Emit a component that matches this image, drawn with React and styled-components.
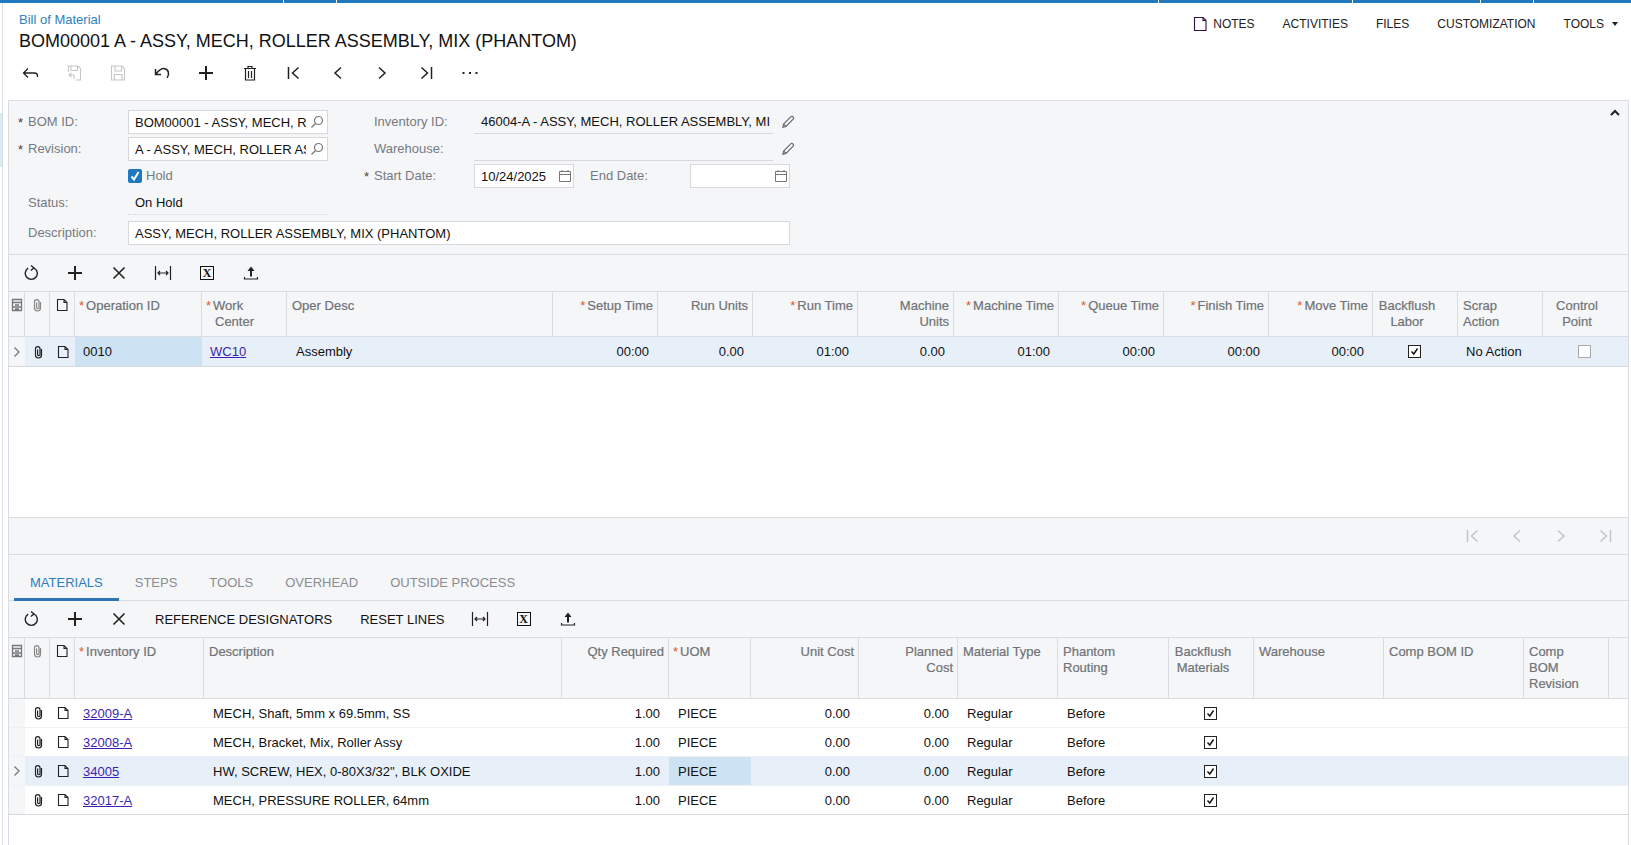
import React from "react";
import styled, { createGlobalStyle } from "styled-components";

const GlobalStyle = createGlobalStyle`
    html, body {
        margin: 0;
        height: 100%;
        background: #fff;
        overflow: hidden;
    }
    body {
        font-family: "Liberation Sans", Arial, sans-serif;
        font-size: 13px;
        color: #111;
    }
`;

const BLUE = "#2079bf";
const LINE = "#d9dce0";
const PANEL = "#f5f6f8";

const Page = styled.div`
    width: 1631px;
    height: 845px;
    display: flex;
    flex-direction: column;
    overflow: hidden;
`;

const TopStripe = styled.div`
    display: flex;
    gap: 1px;
    height: 3px;
    flex: none;
`;

const StripeSegment = styled.div`
    flex: ${(p) => p.$grow} 0 0;
    background: ${BLUE};
`;

const Frame = styled.div`
    flex: 1;
    display: flex;
    min-height: 0;
`;

const SideRail = styled.div`
    width: 2px;
    flex: none;
    border-right: 1px solid ${LINE};
    padding-top: 110px;
`;

const RailMark = styled.div`
    height: 54px;
    background: #dceaf6;
`;

const Content = styled.div`
    flex: 1;
    min-width: 0;
    margin-left: 5px;
    display: flex;
    flex-direction: column;
`;

const Header = styled.div`
    height: 97px;
    flex: none;
    display: flex;
    justify-content: space-between;
`;

const HeaderLeft = styled.div`
    padding: 9px 0 0 11px;
    display: flex;
    flex-direction: column;
`;

const Breadcrumb = styled.div`
    font-size: 13px;
    line-height: 15px;
    color: #2f7fc0;
`;

const Title = styled.h1`
    margin: 2px 0 0;
    font-size: 18px;
    line-height: 24px;
    font-weight: 400;
    color: #111;
    white-space: nowrap;
`;

const MainToolbar = styled.div`
    display: flex;
    margin: 5px 0 0 -11px;
    height: 30px;
    align-items: center;
`;

const ToolButton = styled.span`
    width: 44px;
    flex: none;
    display: flex;
    align-items: center;
    justify-content: center;
    color: ${(p) => (p.$disabled ? "#c4c6c9" : "#222")};
`;

const TopNav = styled.div`
    display: flex;
    align-items: center;
    height: 16px;
    margin-top: 13px;
    padding-right: 13px;
    font-size: 12px;
    color: #222;
`;

const NavItem = styled.span`
    display: inline-flex;
    align-items: center;
    gap: 5px;
    margin-left: 28px;
    white-space: nowrap;
`;

const NavCaret = styled.span`
    width: 0;
    height: 0;
    margin-left: 3px;
    border-left: 3.5px solid transparent;
    border-right: 3.5px solid transparent;
    border-top: 4px solid #222;
`;

const UpperSection = styled.div`
    flex: none;
    width: 1619px;
    box-sizing: content-box;
    border: 1px solid ${LINE};
    border-bottom: none;
    margin-right: 3px;
`;

const FormPanel = styled.div`
    position: relative;
    height: 154px;
    box-sizing: border-box;
    background: ${PANEL};
    border-bottom: 1px solid ${LINE};
    padding-top: 9px;
`;

const CollapseButton = styled.span`
    position: absolute;
    top: 6px;
    right: 7px;
    color: #222;
    display: flex;
`;

const FormTop = styled.div`
    display: flex;
    height: 108px;
`;

const FormColumn = styled.div`
    display: flex;
    flex-direction: column;
    gap: 3px;
    width: ${(p) => p.$width}px;
    flex: none;
`;

const FieldRow = styled.div`
    display: flex;
    align-items: center;
    height: 24px;
    margin-top: ${(p) => p.$top || 0}px;
`;

const FieldLabel = styled.label`
    width: ${(p) => p.$width}px;
    flex: none;
    box-sizing: border-box;
    display: flex;
    align-items: center;
    padding-left: ${(p) => p.$indent || 0}px;
    padding-bottom: 2px;
    color: #767a80;
    font-size: 13px;
`;

const Star = styled.span`
    width: 10px;
    flex: none;
    font-size: 13px;
    line-height: 12px;
    color: #444;
    margin-top: 3px;
`;

const TextBox = styled.div`
    width: ${(p) => p.$width}px;
    height: 24px;
    flex: none;
    box-sizing: border-box;
    display: flex;
    align-items: center;
    background: #fff;
    border: 1px solid #d6d8dc;
    padding: 0 ${(p) => p.$right ?? 3}px 0 6px;
    font-size: 13px;
    color: #111;
`;

const ClippedText = styled.span`
    flex: 1;
    min-width: 0;
    overflow: hidden;
    white-space: nowrap;
`;

const BoxIcon = styled.span`
    flex: none;
    display: flex;
    margin-left: 4px;
    color: #777;
`;

const ReadOnlyValue = styled.div`
    width: ${(p) => p.$width}px;
    height: 24px;
    flex: none;
    box-sizing: border-box;
    display: flex;
    align-items: center;
    padding-left: ${(p) => (p.$indent ? 7 : 3)}px;
    font-size: 13px;
    border-bottom: 1px ${(p) => (p.$dotted ? "dotted #d3d5d8" : "solid #d6d8dc")};
    white-space: nowrap;
    overflow: hidden;
`;

const PencilButton = styled.span`
    display: flex;
    margin-left: 8px;
    color: #666;
`;

const HoldCheck = styled.span`
    width: 14px;
    height: 14px;
    flex: none;
    display: flex;
    align-items: center;
    justify-content: center;
    border-radius: 2px;
    background: ${BLUE};
    color: #fff;
`;

const HoldText = styled.span`
    margin: 0 0 2px 4px;
    font-size: 13px;
    color: #767a80;
`;

const Toolbar = styled.div`
    height: ${(p) => p.$height}px;
    box-sizing: border-box;
    display: flex;
    align-items: center;
    background: ${PANEL};
    border-bottom: 1px solid ${LINE};
`;

const TextButton = styled.span`
    margin: 0 ${(p) => p.$right}px 0 ${(p) => p.$left}px;
    font-size: 13px;
    color: #111;
    white-space: nowrap;
`;

const GridRow = styled.div`
    display: grid;
    grid-template-columns: ${(p) => p.$cols};
    height: ${(p) => p.$height}px;
    box-sizing: border-box;
    background: ${(p) => (p.$selected ? "#e7f0f9" : "#fff")};
    border-bottom: 1px solid ${(p) => (p.$strong ? "#d5d8dc" : "#eff1f3")};
`;

const HeaderRow = styled(GridRow)`
    background: ${PANEL};
    border-bottom: 1px solid ${LINE};
`;

const HeadCell = styled.div`
    box-sizing: border-box;
    border-right: 1px solid ${LINE};
    padding: 6px ${(p) => (p.$icon ? 0 : p.$align === "center" ? 21 : 4)}px 0 ${(p) => (p.$icon ? 0 : 5)}px;
    font-size: 13px;
    font-weight: 400;
    line-height: 16px;
    color: #6f7276;
    -webkit-text-stroke: 0.2px #6f7276;
    text-align: ${(p) => p.$align || "left"};
    display: ${(p) => (p.$icon ? "flex" : "block")};
    justify-content: center;
    align-items: flex-start;
    white-space: nowrap;
    overflow: hidden;
    &:last-child {
        border-right: none;
    }
`;

const HeadLine = styled.span`
    display: block;
    padding-left: ${(p) => (p.$indent ? 8 : 0)}px;
`;

const ReqMark = styled.span`
    color: #e2562a;
    margin: 0 2px 0 -1px;
    -webkit-text-stroke: 0;
`;

const Cell = styled.div`
    box-sizing: border-box;
    min-width: 0;
    display: flex;
    align-items: center;
    justify-content: ${(p) =>
        p.$align === "right" ? "flex-end" : p.$align === "center" ? "center" : "flex-start"};
    padding: 0 ${(p) => (p.$align === "right" ? 9 : p.$align === "center" ? 2 : 0)}px 0
        ${(p) => (p.$align === "left" ? (p.$tight ? 8 : 9) : 0)}px;
    font-size: 13px;
    color: #111;
    white-space: nowrap;
    background: ${(p) => (p.$active ? "#cde3f3" : p.$gutter ? PANEL : "transparent")};
`;

const LeadCell = styled(Cell)`
    padding: 0;
`;

const DataLink = styled.a`
    color: #3a1fb0;
    text-decoration: underline;
`;

const GridCheck = styled.span`
    width: 11px;
    height: 11px;
    display: flex;
    align-items: center;
    justify-content: center;
    background: #fff;
    border: 1px solid ${(p) => (p.$checked ? "#222" : "#aaa")};
    color: #111;
`;

const GridBody = styled.div`
    height: ${(p) => p.$height}px;
    background: #fff;
    border-bottom: 1px solid ${LINE};
`;

const LowerSection = styled.div`
    flex: 1;
    width: 1619px;
    box-sizing: content-box;
    border-left: 1px solid ${LINE};
    border-right: 1px solid ${LINE};
`;

const Pager = styled.div`
    height: 37px;
    box-sizing: border-box;
    background: ${PANEL};
    border-bottom: 1px solid ${LINE};
    display: flex;
    align-items: center;
    justify-content: flex-end;
    gap: 8px;
    padding-right: 5px;
    color: #c2c4c7;
`;

const PagerButton = styled.span`
    width: 36px;
    display: flex;
    justify-content: center;
`;

const TabBar = styled.div`
    height: 46px;
    box-sizing: border-box;
    display: flex;
    align-items: flex-end;
    background: ${PANEL};
    border-bottom: 1px solid ${LINE};
    padding-left: 5px;
`;

const Tab = styled.span`
    height: 31px;
    margin-bottom: -1px;
    box-sizing: border-box;
    padding: 0 16px;
    font-size: 13px;
    line-height: 25px;
    color: ${(p) => (p.$active ? "#2d7dbd" : "#8a8d91")};
    border-bottom: 3px solid ${(p) => (p.$active ? "#2d75b5" : "transparent")};
`;

const ExcelBox = styled.span`
    width: 12px;
    height: 12px;
    display: flex;
    align-items: center;
    justify-content: center;
    border: 1.5px solid #111;
    font-family: "Liberation Serif", serif;
    font-weight: 700;
    font-size: 12px;
    line-height: 12px;
    color: #111;
`;

/* icons */
const Svg = ({ size = 16, children, sw = 1.3, view }) => (
    <svg
        width={size}
        height={size}
        viewBox={view || `0 0 ${size} ${size}`}
        fill="none"
        stroke="currentColor"
        strokeWidth={sw}
    >
        {children}
    </svg>
);

const BackIcon = () => (
    <Svg size={18}>
        <path d="M7 4.5 L2.5 9 L7 13.5 M2.5 9 H13.5 Q16.5 9 16.5 12 V13" />
    </Svg>
);
const SaveBackIcon = () => (
    <Svg size={18} sw={1.1}>
        <path d="M3.5 8 V2 H13 L15.5 4.5 V16 H11 M6 2 V6.5 H12.5 V2 M9 11 H4.5 M6.5 9 L4 11 L6.5 13 M9 11 V15" />
    </Svg>
);
const SaveIcon = () => (
    <Svg size={18} sw={1.1}>
        <path d="M2.5 2 H13 L15.5 4.5 V16 H2.5 Z M6 2 V7 H12.5 V2 M5.5 16 V10.5 H13 V16" />
    </Svg>
);
const UndoIcon = () => (
    <Svg size={18} sw={1.5}>
        <path d="M2.5 5 V10.5 H8 M2.7 10.2 C6 6.2 8 4.2 11 4.5 C15.5 5 17 10 14 13.8" />
    </Svg>
);
const PlusIcon = () => (
    <Svg size={16} sw={2}>
        <path d="M8 1 V15 M1 8 H15" />
    </Svg>
);
const TrashIcon = () => (
    <Svg size={18} sw={1.2}>
        <path d="M3 4.5 H15 M7 4.5 V2.5 H11 V4.5 M4.5 4.5 V16 H13.5 V4.5 M7.5 7 V14 M10.5 7 V14" />
    </Svg>
);
const FirstIcon = () => (
    <Svg size={16} sw={1.5}>
        <path d="M2.5 2 V14 M12.5 2.5 L6.5 8 L12.5 13.5" />
    </Svg>
);
const PrevIcon = () => (
    <Svg size={16} sw={1.5}>
        <path d="M11 2.5 L5 8 L11 13.5" />
    </Svg>
);
const NextIcon = () => (
    <Svg size={16} sw={1.5}>
        <path d="M5 2.5 L11 8 L5 13.5" />
    </Svg>
);
const LastIcon = () => (
    <Svg size={16} sw={1.5}>
        <path d="M13.5 2 V14 M3.5 2.5 L9.5 8 L3.5 13.5" />
    </Svg>
);
const DotsIcon = () => (
    <svg width="16" height="4" viewBox="0 0 16 4" fill="currentColor">
        <rect x="0.5" y="1" width="2" height="2" />
        <rect x="7" y="1" width="2" height="2" />
        <rect x="13.5" y="1" width="2" height="2" />
    </svg>
);
const RefreshIcon = () => (
    <Svg size={16} sw={1.4}>
        <path d="M5.2 3.2 A6 6 0 1 0 11 3 M8 0.5 L11 3 L7.8 5.5" />
    </Svg>
);
const CloseIcon = () => (
    <Svg size={14} sw={1.6}>
        <path d="M1.5 1.5 L12.5 12.5 M12.5 1.5 L1.5 12.5" />
    </Svg>
);
const FitIcon = () => (
    <Svg size={18} sw={1.2}>
        <path d="M1.5 2 V16 M16.5 2 V16 M4 9 H14 M6 7 L4 9 L6 11 M12 7 L14 9 L12 11" />
    </Svg>
);
const UploadIcon = () => (
    <Svg size={16} sw={1.4}>
        <path d="M1.5 12 V14 H14.5 V12" strokeWidth="1.2" />
        <path d="M8 3 V11.5" strokeWidth="2" />
        <path d="M4.5 6 L8 1.5 L11.5 6 Z" fill="currentColor" stroke="none" />
    </Svg>
);
const ClipIcon = ({ color }) => (
    <span style={{ color, display: "flex" }}>
        <Svg size={14} sw={1.2}>
            <path d="M10.5 4 V10 A3 3 0 0 1 4.5 10 V3.8 A2.2 2.2 0 0 1 9 3.8 V9.5 A1.2 1.2 0 0 1 6.6 9.5 V4.5" />
        </Svg>
    </span>
);
const NoteIcon = ({ size = 14, color = "#222" }) => (
    <span style={{ color, display: "flex" }}>
        <Svg size={size} sw={1.1}>
            <path d={`M2.5 1.5 H${size - 5} L${size - 2} 4.5 V${size - 1.5} H2.5 Z M${size - 5} 1.5 V4.5 H${size - 2}`} />
        </Svg>
    </span>
);
const FilesHeadIcon = () => (
    <span style={{ color: "#777", display: "flex" }}>
        <Svg size={14} sw={1.3}>
            <path d="M2.5 1.5 H11.5 V12.5 H2.5 Z M2.5 4.5 H11.5 M2.5 9 H11.5 M5 7 H9 M5 11 H9" />
        </Svg>
    </span>
);
const SearchIcon = () => (
    <Svg size={14} sw={1.2}>
        <circle cx="8.5" cy="5.5" r="4" />
        <path d="M5.5 8.5 L1.5 12.5" />
    </Svg>
);
const CalendarIcon = () => (
    <Svg size={14} sw={1}>
        <path d="M1.5 2.5 H12.5 V12.5 H1.5 Z M1.5 5.5 H12.5 M4 1 V2.5 M10 1 V2.5" />
    </Svg>
);
const PencilIcon = () => (
    <Svg size={14} sw={1.1}>
        <path d="M1.8 12.2 L2.6 9 L10 1.6 Q11 1 12 2 Q13 3 12.4 4 L5 11.4 Z M2.6 9 L5 11.4" />
    </Svg>
);
const Chevron = ({ color = "#777" }) => (
    <span style={{ color, display: "flex" }}>
        <Svg size={12} sw={1.3}>
            <path d="M3.5 1.5 L8 6 L3.5 10.5" />
        </Svg>
    </span>
);
const TickIcon = () => (
    <Svg size={9} sw={1.4}>
        <path d="M1.5 4.5 L3.8 7 L7.5 1.5" />
    </Svg>
);
const HoldTick = () => (
    <Svg size={12} sw={2}>
        <path d="M2.5 6.5 L5 9.5 L9.5 2" />
    </Svg>
);
const UpIcon = () => (
    <Svg size={12} sw={2}>
        <path d="M2 8 L6 4 L10 8" />
    </Svg>
);

const px = (list) => list.map((w) => `${w}px`).join(" ");

const OPERATION_COLS = px([16, 25, 25, 127, 85, 266, 105, 95, 105, 96, 105, 105, 105, 104, 85, 85, 84]);
const MATERIAL_COLS = px([16, 25, 25, 129, 358, 107, 82, 108, 99, 100, 111, 85, 130, 140, 85, 17]);

const operationHead = [
    { label: "Operation ID", req: true },
    { label: "Work", second: "Center", req: true },
    { label: "Oper Desc" },
    { label: "Setup Time", req: true, align: "right" },
    { label: "Run Units", align: "right" },
    { label: "Run Time", req: true, align: "right" },
    { label: "Machine", second: "Units", align: "right" },
    { label: "Machine Time", req: true, align: "right" },
    { label: "Queue Time", req: true, align: "right" },
    { label: "Finish Time", req: true, align: "right" },
    { label: "Move Time", req: true, align: "right" },
    { label: "Backflush", second: "Labor", align: "center" },
    { label: "Scrap", second: "Action" },
    { label: "Control", second: "Point", align: "center" },
];

const materialHead = [
    { label: "Inventory ID", req: true },
    { label: "Description" },
    { label: "Qty Required", align: "right" },
    { label: "UOM", req: true },
    { label: "Unit Cost", align: "right" },
    { label: "Planned", second: "Cost", align: "right" },
    { label: "Material Type" },
    { label: "Phantom", second: "Routing" },
    { label: "Backflush", second: "Materials", align: "center" },
    { label: "Warehouse" },
    { label: "Comp BOM ID" },
    { label: "Comp", second: "BOM", third: "Revision" },
];

const materials = [
    { id: "32009-A", desc: "MECH, Shaft, 5mm x 69.5mm, SS" },
    { id: "32008-A", desc: "MECH, Bracket, Mix, Roller Assy" },
    { id: "34005", desc: 'HW, SCREW, HEX, 0-80X3/32", BLK OXIDE', selected: true },
    { id: "32017-A", desc: "MECH, PRESSURE ROLLER, 64mm" },
];

function HeadCells({ items }) {
    return (
        <>
            <HeadCell $icon><FilesHeadIcon /></HeadCell>
            <HeadCell $icon><ClipIcon color="#888" /></HeadCell>
            <HeadCell $icon><NoteIcon /></HeadCell>
            {items.map((c) => (
                <HeadCell key={c.label} $align={c.align}>
                    <HeadLine>
                        {c.req && <ReqMark>*</ReqMark>}
                        {c.label}
                    </HeadLine>
                    {c.second && <HeadLine $indent={c.req}>{c.second}</HeadLine>}
                    {c.third && <HeadLine>{c.third}</HeadLine>}
                </HeadCell>
            ))}
        </>
    );
}

function RowLead({ selected }) {
    return (
        <>
            <LeadCell $gutter $align="center">{selected && <Chevron />}</LeadCell>
            <LeadCell $align="center"><ClipIcon color="#222" /></LeadCell>
            <LeadCell $align="center"><NoteIcon /></LeadCell>
        </>
    );
}

function App() {
    return (
        <Page>
            <GlobalStyle />
            <TopStripe>
                {[283, 52, 822, 193, 127, 52, 97].map((w, i) => (
                    <StripeSegment key={i} $grow={w} />
                ))}
            </TopStripe>
            <Frame>
                <SideRail><RailMark /></SideRail>
                <Content>
                    <Header>
                        <HeaderLeft>
                            <Breadcrumb>Bill of Material</Breadcrumb>
                            <Title>BOM00001 A - ASSY, MECH, ROLLER ASSEMBLY, MIX (PHANTOM)</Title>
                            <MainToolbar>
                                <ToolButton><BackIcon /></ToolButton>
                                <ToolButton $disabled><SaveBackIcon /></ToolButton>
                                <ToolButton $disabled><SaveIcon /></ToolButton>
                                <ToolButton><UndoIcon /></ToolButton>
                                <ToolButton><PlusIcon /></ToolButton>
                                <ToolButton><TrashIcon /></ToolButton>
                                <ToolButton><FirstIcon /></ToolButton>
                                <ToolButton><PrevIcon /></ToolButton>
                                <ToolButton><NextIcon /></ToolButton>
                                <ToolButton><LastIcon /></ToolButton>
                                <ToolButton><DotsIcon /></ToolButton>
                            </MainToolbar>
                        </HeaderLeft>
                        <TopNav>
                            <NavItem><NoteIcon size={16} color="#33103f" />NOTES</NavItem>
                            <NavItem>ACTIVITIES</NavItem>
                            <NavItem>FILES</NavItem>
                            <NavItem>CUSTOMIZATION</NavItem>
                            <NavItem>TOOLS<NavCaret /></NavItem>
                        </TopNav>
                    </Header>

                    <UpperSection>
                        <FormPanel>
                            <CollapseButton><UpIcon /></CollapseButton>
                            <FormTop>
                                <FormColumn $width={355}>
                                    <FieldRow>
                                        <FieldLabel $width={119} $indent={9}><Star>*</Star>BOM ID:</FieldLabel>
                                        <TextBox $width={200}>
                                            <ClippedText>BOM00001 - ASSY, MECH, R</ClippedText>
                                            <BoxIcon><SearchIcon /></BoxIcon>
                                        </TextBox>
                                    </FieldRow>
                                    <FieldRow>
                                        <FieldLabel $width={119} $indent={9}><Star>*</Star>Revision:</FieldLabel>
                                        <TextBox $width={200}>
                                            <ClippedText>A - ASSY, MECH, ROLLER ASSEMBLY</ClippedText>
                                            <BoxIcon><SearchIcon /></BoxIcon>
                                        </TextBox>
                                    </FieldRow>
                                    <FieldRow>
                                        <FieldLabel $width={119} />
                                        <HoldCheck><HoldTick /></HoldCheck>
                                        <HoldText>Hold</HoldText>
                                    </FieldRow>
                                    <FieldRow>
                                        <FieldLabel $width={119} $indent={19}>Status:</FieldLabel>
                                        <ReadOnlyValue $width={200} $indent $dotted>On Hold</ReadOnlyValue>
                                    </FieldRow>
                                </FormColumn>
                                <FormColumn $width={460}>
                                    <FieldRow>
                                        <FieldLabel $width={110} $indent={10}>Inventory ID:</FieldLabel>
                                        <ReadOnlyValue $width={299} $indent>46004-A - ASSY, MECH, ROLLER ASSEMBLY, MI</ReadOnlyValue>
                                        <PencilButton><PencilIcon /></PencilButton>
                                    </FieldRow>
                                    <FieldRow>
                                        <FieldLabel $width={110} $indent={10}>Warehouse:</FieldLabel>
                                        <ReadOnlyValue $width={299} />
                                        <PencilButton><PencilIcon /></PencilButton>
                                    </FieldRow>
                                    <FieldRow>
                                        <FieldLabel $width={110}><Star>*</Star>Start Date:</FieldLabel>
                                        <TextBox $width={100} $right={1}>
                                            <ClippedText>10/24/2025</ClippedText>
                                            <BoxIcon><CalendarIcon /></BoxIcon>
                                        </TextBox>
                                        <FieldLabel $width={116} $indent={16}>End Date:</FieldLabel>
                                        <TextBox $width={100} $right={1}>
                                            <ClippedText />
                                            <BoxIcon><CalendarIcon /></BoxIcon>
                                        </TextBox>
                                    </FieldRow>
                                </FormColumn>
                            </FormTop>
                            <FieldRow $top={3}>
                                <FieldLabel $width={119} $indent={19}>Description:</FieldLabel>
                                <TextBox $width={662}>
                                    <ClippedText>ASSY, MECH, ROLLER ASSEMBLY, MIX (PHANTOM)</ClippedText>
                                </TextBox>
                            </FieldRow>
                        </FormPanel>

                        <Toolbar $height={37}>
                            <ToolButton><RefreshIcon /></ToolButton>
                            <ToolButton><PlusIcon /></ToolButton>
                            <ToolButton><CloseIcon /></ToolButton>
                            <ToolButton><FitIcon /></ToolButton>
                            <ToolButton><ExcelBox>X</ExcelBox></ToolButton>
                            <ToolButton><UploadIcon /></ToolButton>
                        </Toolbar>

                        <HeaderRow $cols={OPERATION_COLS} $height={45}>
                            <HeadCells items={operationHead} />
                        </HeaderRow>
                        <GridRow $cols={OPERATION_COLS} $height={30} $selected $strong>
                            <RowLead selected />
                            <Cell $active $align="left" $tight>0010</Cell>
                            <Cell $align="left" $tight><DataLink>WC10</DataLink></Cell>
                            <Cell $align="left">Assembly</Cell>
                            <Cell $align="right">00:00</Cell>
                            <Cell $align="right">0.00</Cell>
                            <Cell $align="right">01:00</Cell>
                            <Cell $align="right">0.00</Cell>
                            <Cell $align="right">01:00</Cell>
                            <Cell $align="right">00:00</Cell>
                            <Cell $align="right">00:00</Cell>
                            <Cell $align="right">00:00</Cell>
                            <Cell $align="center"><GridCheck $checked><TickIcon /></GridCheck></Cell>
                            <Cell $align="left" $tight>No Action</Cell>
                            <Cell $align="center"><GridCheck /></Cell>
                        </GridRow>
                        <GridBody $height={150} />
                    </UpperSection>

                    <LowerSection>
                        <Pager>
                            <PagerButton><FirstIcon /></PagerButton>
                            <PagerButton><PrevIcon /></PagerButton>
                            <PagerButton><NextIcon /></PagerButton>
                            <PagerButton><LastIcon /></PagerButton>
                        </Pager>
                        <TabBar>
                            <Tab $active>MATERIALS</Tab>
                            <Tab>STEPS</Tab>
                            <Tab>TOOLS</Tab>
                            <Tab>OVERHEAD</Tab>
                            <Tab>OUTSIDE PROCESS</Tab>
                        </TabBar>
                        <Toolbar $height={37}>
                            <ToolButton><RefreshIcon /></ToolButton>
                            <ToolButton><PlusIcon /></ToolButton>
                            <ToolButton><CloseIcon /></ToolButton>
                            <TextButton $left={14} $right={28}>REFERENCE DESIGNATORS</TextButton>
                            <TextButton $left={0} $right={13}>RESET LINES</TextButton>
                            <ToolButton><FitIcon /></ToolButton>
                            <ToolButton><ExcelBox>X</ExcelBox></ToolButton>
                            <ToolButton><UploadIcon /></ToolButton>
                        </Toolbar>
                        <HeaderRow $cols={MATERIAL_COLS} $height={61}>
                            <HeadCells items={materialHead} />
                            <HeadCell />
                        </HeaderRow>
                        {materials.map((m, i) => (
                            <GridRow
                                key={m.id}
                                $cols={MATERIAL_COLS}
                                $height={29}
                                $selected={m.selected}
                                $strong={i === materials.length - 1}
                            >
                                <RowLead selected={m.selected} />
                                <Cell $align="left" $tight><DataLink>{m.id}</DataLink></Cell>
                                <Cell $align="left">{m.desc}</Cell>
                                <Cell $align="right">1.00</Cell>
                                <Cell $align="left" $active={m.selected}>PIECE</Cell>
                                <Cell $align="right">0.00</Cell>
                                <Cell $align="right">0.00</Cell>
                                <Cell $align="left">Regular</Cell>
                                <Cell $align="left">Before</Cell>
                                <Cell $align="center"><GridCheck $checked><TickIcon /></GridCheck></Cell>
                                <Cell />
                                <Cell />
                                <Cell />
                                <Cell />
                            </GridRow>
                        ))}
                    </LowerSection>
                </Content>
            </Frame>
        </Page>
    );
}

export default App;
